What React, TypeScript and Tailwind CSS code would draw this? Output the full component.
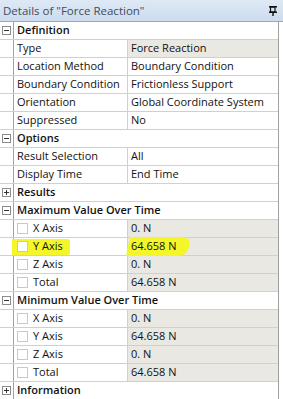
const font = { fontFamily: '"Open Sans", "Noto Sans", sans-serif' };

type Row =
  | { kind: "head"; label: string; open: boolean }
  | { kind: "prop"; label: string; value: string; ro?: boolean; check?: boolean; hl?: boolean };

const rows: Row[] = [
  { kind: "head", label: "Definition", open: true },
  { kind: "prop", label: "Type", value: "Force Reaction", ro: true },
  { kind: "prop", label: "Location Method", value: "Boundary Condition" },
  { kind: "prop", label: "Boundary Condition", value: "Frictionless Support" },
  { kind: "prop", label: "Orientation", value: "Global Coordinate System" },
  { kind: "prop", label: "Suppressed", value: "No" },
  { kind: "head", label: "Options", open: true },
  { kind: "prop", label: "Result Selection", value: "All" },
  { kind: "prop", label: "Display Time", value: "End Time" },
  { kind: "head", label: "Results", open: false },
  { kind: "head", label: "Maximum Value Over Time", open: true },
  { kind: "prop", label: "X Axis", value: "0. N", ro: true, check: true },
  { kind: "prop", label: "Y Axis", value: "64.658 N", ro: true, check: true, hl: true },
  { kind: "prop", label: "Z Axis", value: "0. N", ro: true, check: true },
  { kind: "prop", label: "Total", value: "64.658 N", ro: true, check: true },
  { kind: "head", label: "Minimum Value Over Time", open: true },
  { kind: "prop", label: "X Axis", value: "0. N", ro: true, check: true },
  { kind: "prop", label: "Y Axis", value: "64.658 N", ro: true, check: true },
  { kind: "prop", label: "Z Axis", value: "0. N", ro: true, check: true },
  { kind: "prop", label: "Total", value: "64.658 N", ro: true, check: true },
  { kind: "head", label: "Information", open: false },
];

function Toggle({ open }: { open: boolean }) {
  return (
    <div className="w-[9px] h-[9px] border border-[#8c8c8c] bg-white relative">
      <div className="absolute left-[1px] right-[1px] top-[3px] h-px bg-[#333]" />
      {!open && <div className="absolute top-[1px] bottom-[1px] left-[3px] w-px bg-[#333]" />}
    </div>
  );
}

function Pin() {
  return (
    <svg width="8" height="10" viewBox="0 0 8 10">
      <rect x="0" y="0" width="8" height="1.5" fill="#111" />
      <rect x="1.5" y="1" width="4.5" height="5" fill="none" stroke="#111" strokeWidth="1.2" />
      <rect x="0" y="5.5" width="8" height="1.5" fill="#111" />
      <rect x="3.3" y="6.5" width="1.4" height="3.5" fill="#111" />
    </svg>
  );
}

export default function App() {
  return (
    <div className="w-[283px] h-[399px] overflow-hidden bg-white text-[11px] text-[#111] whitespace-nowrap" style={font}>
      <div className="h-[22px] flex items-center justify-between pl-[3px] pr-[6px] bg-gradient-to-b from-[#dfe9f5] to-[#cbdcef] border-b border-[#9aa8b8] text-[#3e4c5e] text-[11.5px]">
        <span>Details of "Force Reaction"</span>
        <Pin />
      </div>
      <div className="w-[279px] border-r border-[#a0a0a0] relative">
        {rows.map((r, i) => (
          <div key={i} className="h-[18px] flex border-b border-[#d0d0d0] relative">
            <div className="w-[14px] shrink-0 border-r border-[#a0a0a0] flex items-center justify-center">
              {r.kind === "head" && <Toggle open={r.open} />}
            </div>
            {r.kind === "head" ? (
              <div className="flex-1 pl-[3px] flex items-center font-semibold text-[11px]">{r.label}</div>
            ) : (
              <>
                <div className="w-[114px] shrink-0 border-r border-[#d0d0d0] flex items-center pl-[3px] relative">
                  {r.hl && (
                    <div className="absolute left-[-2px] top-[1px] w-[58px] h-[16px] bg-[#f4f62a] rounded-r-[3px]" />
                  )}
                  {r.check && (
                    <div className="w-[11px] h-[11px] border border-[#c8c8c8] bg-white mr-[5px] relative" />
                  )}
                  <span className="relative">{r.label}</span>
                </div>
                <div className={`flex-1 flex items-center pl-[3px] relative ${r.ro ? "bg-[#e9e8e3]" : ""}`}>
                  {r.hl && (
                    <div className="absolute left-0 top-[-1px] w-[61px] h-[19px] bg-[#f4f62a] rounded-r-[8px] -skew-x-12" />
                  )}
                  <span className="relative">{r.value}</span>
                </div>
              </>
            )}
          </div>
        ))}
      </div>
    </div>
  );
}
